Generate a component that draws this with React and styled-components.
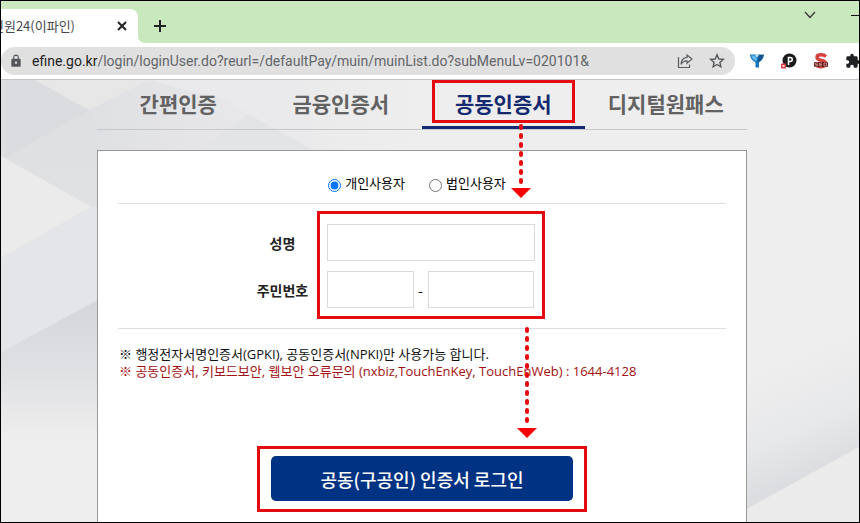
import React, { useState } from 'react';
import styled, { createGlobalStyle } from 'styled-components';
import { MdLock, MdExtension } from 'react-icons/md';

const GlobalStyle = createGlobalStyle`
  * {
    box-sizing: border-box;
  }

  body {
    margin: 0;
    font-family: 'Noto Sans CJK KR', sans-serif;
    color: #000;
  }

  button, input {
    font-family: inherit;
    margin: 0;
    padding: 0;
  }
`;

const BrowserWindow = styled.div`
  display: flex;
  flex-direction: column;
  min-height: 100vh;
  border: 1px solid #000;
  overflow: hidden;
`;

/* ---- tab strip ---- */

const TabStrip = styled.header`
  display: flex;
  align-items: flex-start;
  height: 42px;
  background: #c9e8bd;
`;

const BrowserTab = styled.div`
  display: flex;
  align-items: center;
  justify-content: space-between;
  width: 137px;
  height: 34px;
  margin-top: 8px;
  padding-right: 9px;
  background: #fff;
  border-radius: 0 8px 0 0;
`;

const TabTitle = styled.span`
  display: flex;
  justify-content: flex-end;
  width: 74px;
  overflow: hidden;
  white-space: nowrap;
  font-size: 13px;
  line-height: 20px;
  color: #45494d;
`;

const TabCurve = styled.svg`
  align-self: flex-end;
  width: 8px;
  height: 8px;
`;

const IconButton = styled.button`
  display: flex;
  align-items: center;
  justify-content: center;
  flex: none;
  width: ${({ $size }) => $size || 16}px;
  height: ${({ $size }) => $size || 16}px;
  border: 0;
  background: none;
  color: ${({ $color }) => $color || '#202124'};
`;

const NewTab = styled(IconButton)`
  margin: 16px auto 0 5px;
`;

const WindowControls = styled.div`
  display: flex;
  gap: 33px;
  margin: 6px -8px 0 0;
`;

/* ---- address bar ---- */

const Toolbar = styled.div`
  display: flex;
  align-items: center;
  height: 37px;
  border-bottom: 1px solid #c4c5c6;
  background: #fff;
`;

const AddressBar = styled.div`
  display: flex;
  align-items: center;
  flex: 1;
  min-width: 0;
  height: 28px;
  padding: 0 10px 0 8px;
  border-radius: 14px;
  background: #e0e0e0;
`;

const Url = styled.span`
  flex: 1;
  min-width: 0;
  margin-left: 9px;
  overflow: hidden;
  white-space: nowrap;
  font-family: Roboto, sans-serif;
  font-size: 14px;
  line-height: 20px;
  color: #63666a;

  b {
    font-weight: 400;
    color: #222;
  }
`;

const AddressActions = styled.div`
  display: flex;
  gap: 16px;
`;

const Extensions = styled.div`
  display: flex;
  gap: 16px;
  margin: 0 -2px 0 14px;
`;

/* ---- page ---- */

const Page = styled.main`
  position: relative;
  display: flex;
  flex: 1;
  flex-direction: column;
  padding: 0 112px 0 96px;
  background: #eee;
`;

const Facets = styled.svg`
  position: absolute;
  top: 0;
  ${({ $side }) => $side}: 0;
`;

const AuthTabs = styled.nav`
  position: relative;
  display: grid;
  grid-template-columns: repeat(4, 1fr);
  height: 50px;
  border-bottom: 1px solid #c6c8cc;
`;

const AuthTab = styled.a`
  position: relative;
  display: flex;
  align-items: center;
  justify-content: center;
  height: 49px;
  border-bottom: 3px solid ${({ $active }) => ($active ? '#14296f' : 'transparent')};
  color: ${({ $active }) => ($active ? '#14296f' : '#626262')};
  font-size: 21px;
  font-weight: 700;
  line-height: 30px;
  text-decoration: none;
`;

const Card = styled.form`
  position: relative;
  flex: 1;
  margin-top: 20px;
  padding: 0 20px 20px;
  border: 1px solid #999;
  border-bottom: 0;
  background: #fff;
`;

const UserTypes = styled.div`
  display: flex;
  justify-content: center;
  gap: 24px;
  height: 53px;
  padding: 22px 10px 0 0;
  border-bottom: 1px solid #ddd;
`;

const RadioLabel = styled.label`
  display: flex;
  gap: 4px;
  font-size: 13px;
  line-height: 20px;

  input {
    width: 13px;
    height: 13px;
    margin-top: 6px;
  }
`;

const Fields = styled.div`
  display: flex;
  justify-content: center;
  height: 125px;
  padding: 20px 53px 0 0;
  border-bottom: 1px solid #ddd;
`;

const FieldGrid = styled.div`
  position: relative;
  display: grid;
  grid-template-columns: 52px 208px;
  grid-auto-rows: 37px;
  align-items: center;
  gap: 10px 18px;
  height: 84px;
`;

const FieldLabel = styled.label`
  text-align: center;
  white-space: nowrap;
  font-size: 14px;
  font-weight: 700;
  line-height: 20px;
  color: #222;
`;

const TextInput = styled.input`
  width: ${({ $width }) => ($width ? `${$width}px` : '100%')};
  height: 37px;
  padding: 0 8px;
  border: 1px solid #d9dbd7;
  background: #fff;
  font-size: 14px;
`;

const IdNumber = styled.div`
  display: flex;
  align-items: center;

  span {
    width: 14px;
    text-align: center;
    font-size: 14px;
    line-height: 20px;
  }
`;

const Notes = styled.div`
  padding: 17px 0 0 1px;
`;

const Note = styled.p`
  margin: 0;
  font-family: 'Open Sans', 'Noto Sans CJK KR', sans-serif;
  font-size: 13px;
  line-height: 17px;
  white-space: nowrap;
  color: ${({ $warning }) => ($warning ? '#a30f12' : '#111')};
`;

const Submit = styled.div`
  display: flex;
  justify-content: center;
  margin-top: 76px;
`;

const LoginButton = styled.button`
  position: relative;
  width: 302px;
  height: 45px;
  border: 0;
  border-radius: 5px;
  background: #003283;
  color: #fff;
  font-size: 18px;
  font-weight: 500;
  line-height: 26px;
`;

/* ---- guide marks over the form ---- */

const Highlight = styled.span`
  position: absolute;
  inset: ${({ $inset }) => $inset};
  border: 3px solid #e30b10;
  pointer-events: none;
`;

const ArrowBox = styled.svg`
  position: absolute;
  z-index: 1;
  top: ${({ $top }) => $top}px;
  left: ${({ $left }) => $left};
  pointer-events: none;
`;

function Arrow({ top, left, length }) {
  return (
    <ArrowBox $top={top} $left={left} width="20" height={length} aria-hidden="true">
      <line
        x1="10"
        y1="3"
        x2="10"
        y2={length - 10}
        stroke="#e30b10"
        strokeWidth="4"
        strokeLinecap="round"
        strokeDasharray="2 7"
      />
      <path d={`M0 ${length - 10}H20L10 ${length}Z`} fill="#f50005" />
    </ArrowBox>
  );
}

function LeftFacets() {
  return (
    <Facets $side="left" width="420" height="443" aria-hidden="true">
      <defs>
        <linearGradient id="shade" x1="0" y1="0" x2="0" y2="1">
          <stop offset="0" stopColor="#dcdee0" />
          <stop offset="1" stopColor="#e3e3e4" />
        </linearGradient>
        <linearGradient id="floor" x1="0" y1="0" x2="0" y2="1">
          <stop offset="0" stopColor="#d3d6d9" />
          <stop offset="0.5" stopColor="#dfe0e3" />
          <stop offset="1" stopColor="#eee" />
        </linearGradient>
        <linearGradient id="fade" x1="0" y1="0" x2="1" y2="0">
          <stop offset="0" stopColor="#e1e2e5" />
          <stop offset="1" stopColor="#eee" />
        </linearGradient>
        <linearGradient id="peak" x1="0" y1="0" x2="1" y2="0">
          <stop offset="0" stopColor="#dfe0e3" />
          <stop offset="1" stopColor="#e8e8ea" />
        </linearGradient>
      </defs>
      <rect width="420" height="80" fill="url(#fade)" />
      <path d="M0 0H34L88 30H97V200H0Z" fill="url(#shade)" />
      <path d="M88 30L4 78V0H34Z" fill="#dadcdf" />
      <path d="M34 0H148L88 30Z" fill="#e7e7e8" />
      <path d="M88 30L148 0L225 20L247 34L196 71H88Z" fill="url(#peak)" />
      <path d="M148 0H300L314 71L225 20Z" fill="#eaeaec" />
      <path d="M196 71L247 34L314 71Z" fill="#e3e4e6" />
      <path d="M0 76L90 127L0 178Z" fill="#ebebeb" />
      <path d="M0 178L90 127H97V221L0 272Z" fill="#e4e5e8" />
      <path d="M0 272L97 220V360H0Z" fill="url(#floor)" />
    </Facets>
  );
}

function RightFacets() {
  return (
    <Facets $side="right" width="112" height="443" aria-hidden="true">
      <defs>
        <linearGradient id="slope" gradientUnits="userSpaceOnUse" x1="20" y1="290" x2="64" y2="394">
          <stop offset="0" stopColor="#eee" />
          <stop offset="0.6" stopColor="#e7e8ea" />
          <stop offset="1" stopColor="#dcdde0" />
        </linearGradient>
      </defs>
      <path d="M0 250H112V367L0 429Z" fill="url(#slope)" />
      <path d="M0 429L112 367V443H0Z" fill="#ebebeb" />
    </Facets>
  );
}

function BrowserChrome() {
  return (
    <>
      <TabStrip>
        <BrowserTab>
          <TabTitle>민원24(이파인)</TabTitle>
          <IconButton $size={14} aria-label="탭 닫기">
            <svg width="10" height="10" viewBox="0 0 10 10" stroke="currentColor" strokeWidth="2">
              <path d="M1 1L9 9M9 1L1 9" />
            </svg>
          </IconButton>
        </BrowserTab>
        <TabCurve viewBox="0 0 8 8">
          <path d="M0 0Q0 8 8 8H0Z" fill="#fff" />
        </TabCurve>
        <NewTab $size={18} aria-label="새 탭">
          <svg width="12" height="12" viewBox="0 0 12 12" stroke="currentColor" strokeWidth="2">
            <path d="M6 0V12M0 6H12" />
          </svg>
        </NewTab>
        <WindowControls>
          <IconButton aria-label="탭 검색">
            <svg width="12" height="8" viewBox="0 0 12 8" fill="none" stroke="#333" strokeWidth="1.2">
              <path d="M1 1L6 6.5L11 1" />
            </svg>
          </IconButton>
          <IconButton aria-label="최소화">
            <svg width="16" height="16" stroke="#111">
              <path d="M0 8.5H16" />
            </svg>
          </IconButton>
        </WindowControls>
      </TabStrip>
      <Toolbar>
        <AddressBar>
          <MdLock size={14} color="#53565a" />
          <Url>
            <b>efine.go.kr</b>/login/loginUser.do?reurl=/defaultPay/muin/muinList.do?subMenuLv=020101&amp;
          </Url>
          <AddressActions>
            <IconButton $color="#5a5d61" aria-label="공유">
              <svg width="16" height="16" viewBox="0 0 16 16" fill="none" stroke="currentColor" strokeWidth="1.2">
                <path d="M1.5 4V14.5H12.5V11.5" />
                <path d="M10 2L15 6L10 10.2V7.8C7 7.6 5.4 8.8 4 11.4C4.2 7.5 6.5 4.8 10 4.4Z" />
              </svg>
            </IconButton>
            <IconButton $color="#55585c" aria-label="북마크">
              <svg width="16" height="16" viewBox="0 0 16 16" fill="none" stroke="currentColor" strokeWidth="1.4">
                <path d="M8 1.8L9.8 6L14.3 6.4L10.9 9.4L11.9 13.8L8 11.5L4.1 13.8L5.1 9.4L1.7 6.4L6.2 6Z" />
              </svg>
            </IconButton>
          </AddressActions>
        </AddressBar>
        <Extensions>
          <IconButton aria-label="필터">
            <svg width="16" height="16" viewBox="0 0 16 16">
              <path d="M1 1.5H15Q15 6 10 9.5V14.5H6.5V9.5Q1 6 1 1.5Z" fill="#1b74ba" />
              <path d="M2 2.5H7L8 6L7 8.5Q3 6 2 2.5Z" fill="#5db9ee" />
              <path d="M9.5 2H14.5Q13.5 7 9 9Z" fill="#15528f" />
              <path d="M6 1.5H10L8 4.5Z" fill="#cfeafa" />
            </svg>
          </IconButton>
          <IconButton aria-label="P">
            <svg width="16" height="16" viewBox="0 0 16 16">
              <circle cx="8.5" cy="7.5" r="7" fill="#1b1b1b" />
              <path d="M7.5 12V4.5H9Q11.3 4.5 11.3 6.5T9 8.5H7.5" fill="none" stroke="#fff" strokeWidth="1.6" />
              <rect x="0" y="10.5" width="5" height="5" rx="1" fill="#d93843" />
              <path d="M1.5 12L3.5 14M3.5 12L1.5 14" stroke="#fff" />
            </svg>
          </IconButton>
          <IconButton aria-label="SEO">
            <svg width="16" height="16" viewBox="0 0 16 16" fill="none">
              <path d="M13 3.5Q11 1.8 8 1.8Q4 1.8 4 4.3Q4 6.5 8 7.3Q12.5 8 12.5 10.5Q12.5 13.7 8 13.7Q4.5 13.7 3 11.5" stroke="#d8403c" strokeWidth="3.4" />
              <rect x="1" y="9" width="14" height="5" rx="1" fill="#641f20" />
              <path d="M5 10H2.5V11.5H4.5V13H2M9 10H6.7V13H9M6.7 11.5H9M11 10H13.5V13H11Z" stroke="#f0aaa5" strokeWidth="0.7" />
            </svg>
          </IconButton>
          <IconButton aria-label="확장 프로그램">
            <MdExtension size={16} />
          </IconButton>
        </Extensions>
      </Toolbar>
    </>
  );
}

const authMethods = ['간편인증', '금융인증서', '공동인증서', '디지털원패스'];

function App() {
  const [userType, setUserType] = useState('personal');

  return (
    <BrowserWindow>
      <GlobalStyle />
      <BrowserChrome />
      <Page>
        <LeftFacets />
        <RightFacets />
        <AuthTabs>
          {authMethods.map((name) => {
            const active = name === '공동인증서';
            return (
              <AuthTab key={name} href="#login" $active={active}>
                {name}
                {active && (
                  <>
                    <Highlight $inset="0 10px 3px 10px" />
                    <Arrow top={43} left="calc(50% + 8px)" length={75} />
                  </>
                )}
              </AuthTab>
            );
          })}
        </AuthTabs>

        <Card id="login" onSubmit={(e) => e.preventDefault()}>
          <UserTypes>
            <RadioLabel>
              <input
                type="radio"
                name="userType"
                checked={userType === 'personal'}
                onChange={() => setUserType('personal')}
              />
              개인사용자
            </RadioLabel>
            <RadioLabel>
              <input
                type="radio"
                name="userType"
                checked={userType === 'company'}
                onChange={() => setUserType('company')}
              />
              법인사용자
            </RadioLabel>
          </UserTypes>

          <Fields>
            <FieldGrid>
              <FieldLabel htmlFor="userName">성명</FieldLabel>
              <TextInput id="userName" type="text" />
              <FieldLabel htmlFor="idFront">주민번호</FieldLabel>
              <IdNumber>
                <TextInput id="idFront" type="text" maxLength={6} $width={87} />
                <span>-</span>
                <TextInput type="password" maxLength={7} $width={106} aria-label="주민번호 뒷자리" />
              </IdNumber>
              <Highlight $inset="-13px -10px -11px 60px" />
              <Arrow top={102} left="260px" length={112} />
            </FieldGrid>
          </Fields>

          <Notes>
            <Note>※ 행정전자서명인증서(GPKI), 공동인증서(NPKI)만 사용가능 합니다.</Note>
            <Note $warning>
              ※ 공동인증서, 키보드보안, 웹보안 오류문의 (nxbiz,TouchEnKey, TouchEnWeb) : 1644-4128
            </Note>
          </Notes>

          <Submit>
            <LoginButton type="submit">
              공동(구공인) 인증서 로그인
              <Highlight $inset="-10px -14px -11px -14px" />
            </LoginButton>
          </Submit>
        </Card>
      </Page>
    </BrowserWindow>
  );
}

export default App;
